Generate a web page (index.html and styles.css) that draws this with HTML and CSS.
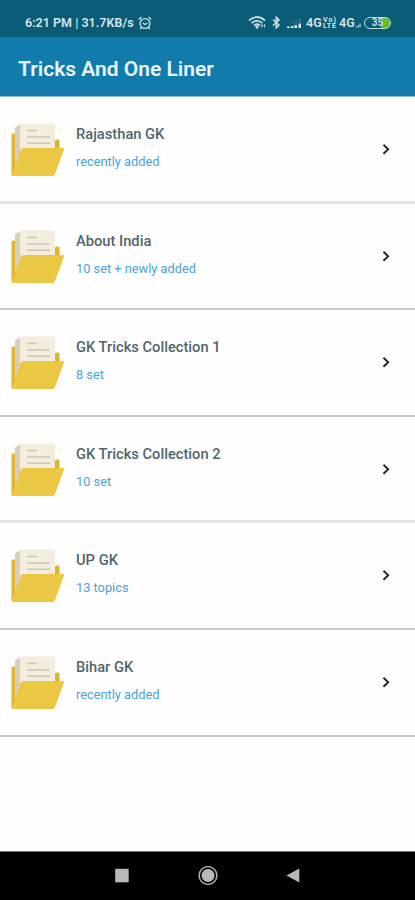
FILE: index.html
```
<!DOCTYPE html>
<html lang="en">
<head>
<meta charset="utf-8">
<title>Tricks And One Liner</title>
<link rel="stylesheet" href="styles.css">
</head>
<body>
<svg width="0" height="0" class="defs">
  <symbol id="folder" viewBox="0 0 54 54">
    <path d="M.5 12q0-1.500 1.500-1.500H15V53H2Q.5 53 .5 51z" fill="#e2b433"/>
    <path d="M44 18q0-1.500 1.500-1.500h1.500q1.500 0 1.500 1.500v10H44z" fill="#dfb22f"/>
    <path d="M4 4.500L10 .8V28L5 42H4z" fill="#d5cfbb"/>
    <path d="M9 2Q9 .5 10.500 .5H44V28H9z" fill="#f2eddd"/>
    <path d="M16 7.500H26M16 14H39M16 20.200H39" stroke="#cdc6b8" stroke-width="1.500"/>
    <path d="M10 26.500q.6-1.500 2-1.500H52q1.500 0 1 1.500L44 51q-.7 2-2.500 2H2Q.7 53 1 51.500L4.500 42z" fill="#eac843"/>
  </symbol>
  <symbol id="chevron" viewBox="0 0 10 12">
    <path d="M2.500 1.800L7.200 6.300L2.500 10.800" fill="none" stroke="#272727" stroke-width="1.900"/>
  </symbol>
</svg>
<div class="screen">
  <div class="status">
    <span class="clock">6:21 PM | 31.7KB/s</span>
    <svg class="alarm" width="14" height="14" viewBox="0 0 14 14" fill="none" stroke="#cfe1e7" stroke-width="1.300"><circle cx="7" cy="7.500" r="4.900"/><path d="M.8 3.500L3.500 1M13.200 3.500L10.500 1M4.800 7l2.200 1.500L9.500 7M3.500 11.500L2.300 13M10.500 11.500l1.200 1.500"/></svg>
    <svg class="wifi" width="19" height="13" viewBox="0 0 19 13" fill="none" stroke="#c5dbe3" stroke-width="1.700"><path d="M1 4.500Q9-2.500 17 4.500M3.500 7.200Q9 2.500 14.500 7.200M6 9.500Q9 7 12 9.500"/><circle cx="9" cy="11" r=".8"/><path d="M14 8.200v3M16.500 8.200v3" stroke-width="1.200"/></svg>
    <svg class="bt" width="9" height="13" viewBox="0 0 9 13" fill="none" stroke="#cfe1e7" stroke-width="1.500"><path d="M1 3.500l6 5.500-2.700 2.800V1.200L7 4 1 9.500"/></svg>
    <svg class="signal" width="17" height="12" viewBox="0 0 17 12"><path d="M1 11V9.500h3V11zM5 11V9h2.500v2zM8.500 11V8H11v3zM12.500 11V6.500H15V11z" fill="#d3e4ea"/><path d="M4.500 7V5.500H7V7zM8.500 6.500V3.500H11v3zM12.500 5.500V1.500H15v4z" fill="#2f6f86"/></svg>
    <span class="net">4G</span>
    <svg class="volte" width="14" height="13" viewBox="0 0 14 13"><text x="0" y="5.800" textLength="13">Vo)</text><text x="0" y="12.200" textLength="13">LTE</text></svg>
    <span class="net">4G</span>
    <svg class="mini" width="5" height="6" viewBox="0 0 5 6"><path d="M0 5.500V4h1.200v1.500zM1.800 5.500V3H3v2.500zM3.500 5.500V1.500h1.200v4z" fill="#aecbd5"/></svg>
    <span class="battery">35</span>
  </div>
  <header class="bar"><h1>Tricks And One Liner</h1></header>
  <main class="list">
    <div class="row thick"><svg class="folder"><use href="#folder"/></svg><div class="text"><h2>Rajasthan GK</h2><p>recently added</p></div><svg class="chev"><use href="#chevron"/></svg></div>
    <div class="row"><svg class="folder"><use href="#folder"/></svg><div class="text"><h2>About India</h2><p>10 set + newly added</p></div><svg class="chev"><use href="#chevron"/></svg></div>
    <div class="row"><svg class="folder"><use href="#folder"/></svg><div class="text"><h2>GK Tricks Collection 1</h2><p>8 set</p></div><svg class="chev"><use href="#chevron"/></svg></div>
    <div class="row thick"><svg class="folder"><use href="#folder"/></svg><div class="text"><h2>GK Tricks Collection 2</h2><p>10 set</p></div><svg class="chev"><use href="#chevron"/></svg></div>
    <div class="row"><svg class="folder"><use href="#folder"/></svg><div class="text"><h2>UP GK</h2><p>13 topics</p></div><svg class="chev"><use href="#chevron"/></svg></div>
    <div class="row"><svg class="folder"><use href="#folder"/></svg><div class="text"><h2>Bihar GK</h2><p>recently added</p></div><svg class="chev"><use href="#chevron"/></svg></div>
  </main>
  <nav class="nav">
    <svg width="20" height="20" viewBox="0 0 20 20"><rect x="3.200" y="2.800" width="13.500" height="13.500" fill="#b9b9b9"/></svg>
    <svg width="20" height="20" viewBox="0 0 20 20"><circle cx="10" cy="9.500" r="8.900" fill="none" stroke="#b0b0b0" stroke-width="1.500"/><circle cx="10" cy="9.500" r="6.500" fill="#b9b9b9"/></svg>
    <svg width="20" height="20" viewBox="0 0 20 20"><path d="M2.500 9.500L15.300 2.500V16.500z" fill="#b9b9b9"/></svg>
  </nav>
</div>
</body>
</html>
```
FILE: styles.css
```
* { box-sizing: border-box; }
body { margin: 0; font-family: Roboto, "Liberation Sans", sans-serif; background: #fefefe; }
.defs { display: block; }
h1, h2, p { margin: 0; font-weight: 500; white-space: nowrap; }
.screen { width: 415px; height: 900px; display: flex; flex-direction: column; overflow: hidden; }
.status { height: 37px; flex: none; background: #0a5b76; color: #d6e6ec; display: flex; align-items: center; padding: 8px 24px 0 25px; font-size: 12.500px; font-weight: 600; }
.status svg { flex: none; }
.clock { width: 110px; white-space: nowrap; letter-spacing: 0.02px; }
.alarm { margin-left: 3px; }
.wifi { margin-left: auto; }
.bt { margin-left: 5px; }
.signal { margin: 0 3px 0 5px; }
.net { font-size: 12.500px; width: 16px; }
.volte { margin: 0 2px 0 1px; }
.volte text { font-size: 7px; font-weight: 700; fill: #d6e6ec; }
.mini { margin: 5px 3px 0 1px; }
.battery { width: 27px; height: 12px; border: 1.500px solid #c0dce1; border-radius: 6px; background: linear-gradient(90deg, #0a5b76 62%, #65bd24 62%); font-size: 10px; line-height: 10px; text-align: center; flex: none; }
.bar { height: 60px; flex: none; background: #117bac; border-bottom: 1px solid #8bbcd2; display: flex; align-items: center; padding: 4px 18px 0; }
.bar h1 { font-size: 21px; line-height: 24px; font-weight: 600; color: #e9f5fa; }
.list { flex: 1; }
.row { height: 106.600px; display: flex; align-items: flex-start; padding: 26px 24px 0 11px; border-bottom: 2px solid #c4cacc; }
.row.thick { border-bottom: 3px solid #e0e4e5; }
.folder { width: 54px; height: 54px; flex: none; }
.text { margin-left: 11px; padding-top: 2px; flex: 1; }
.text h2 { font-size: 14.700px; line-height: 18px; color: #50666b; }
.text p { margin-top: 11px; font-size: 12.800px; line-height: 16px; font-weight: 400; color: #4ca2df; }
.chev { width: 10px; height: 12px; margin-top: 20px; flex: none; }
.nav { height: 49px; flex: none; background: #000; border-top: 1px solid #777; display: flex; justify-content: center; align-items: center; gap: 66px; }
```
